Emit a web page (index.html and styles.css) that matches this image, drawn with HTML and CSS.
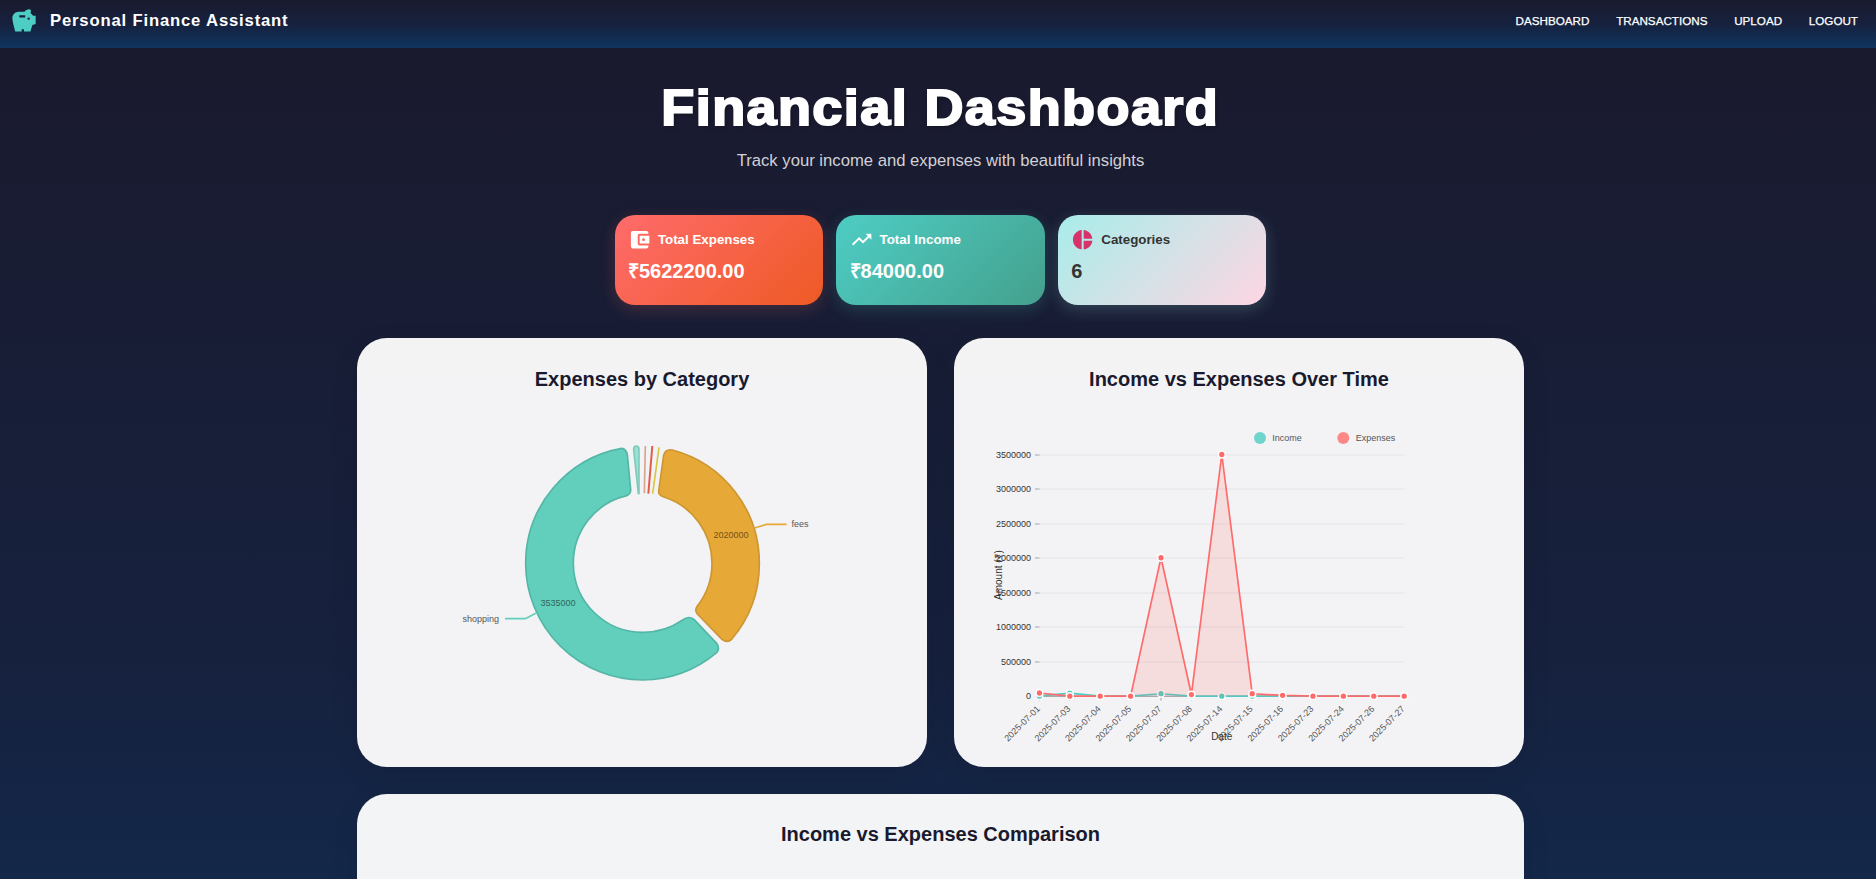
FILE: index.html
```html
<!DOCTYPE html>
<html lang="en">
<head>
<meta charset="utf-8">
<title>Personal Finance Assistant</title>
<link rel="stylesheet" href="styles.css">
</head>
<body>
<header class="navbar">
  <div class="brand">
    <svg class="brand-icon" viewBox="0 0 24 24"><path d="m19.83 7.5-2.27-2.27c.07-.42.18-.81.32-1.15.08-.18.12-.37.12-.58 0-.83-.67-1.5-1.5-1.5-1.64 0-3.09.79-4 2h-5C4.46 4 2 6.46 2 9.5S4.5 21 4.5 21H10v-2h2v2h5.5l1.68-5.59 2.82-.94V7.5h-2.17zM13 9H8V7h5v2zm3 2c-.55 0-1-.45-1-1s.45-1 1-1 1 .45 1 1-.45 1-1 1z"/></svg>
    <span class="brand-name">Personal Finance Assistant</span>
  </div>
  <nav class="links"><a>DASHBOARD</a><a>TRANSACTIONS</a><a>UPLOAD</a><a>LOGOUT</a></nav>
</header>
<main class="page">
  <h1 class="title">Financial Dashboard</h1>
  <p class="subtitle">Track your income and expenses with beautiful insights</p>
  <section class="stats">
    <div class="stat stat-expenses">
      <div class="stat-head"><svg viewBox="0 0 24 24"><path d="M21 18v1c0 1.1-.9 2-2 2H5c-1.11 0-2-.9-2-2V5c0-1.1.89-2 2-2h14c1.1 0 2 .9 2 2v1h-9c-1.11 0-2 .9-2 2v8c0 1.1.89 2 2 2h9zm-9-2h10V8H12v8zm4-2.5c-.83 0-1.5-.67-1.5-1.5s.67-1.5 1.5-1.5 1.5.67 1.5 1.5-.67 1.5-1.5 1.5z"/></svg><span>Total Expenses</span></div>
      <div class="stat-value">₹5622200.00</div>
    </div>
    <div class="stat stat-income">
      <div class="stat-head"><svg viewBox="0 0 24 24"><path d="m16 6 2.29 2.29-4.88 4.88-4-4L2 16.59 3.41 18l6-6 4 4 6.3-6.29L22 12V6z"/></svg><span>Total Income</span></div>
      <div class="stat-value">₹84000.00</div>
    </div>
    <div class="stat stat-categories">
      <div class="stat-head"><svg viewBox="0 0 24 24"><path d="M11 2v20c-5.07-.5-9-4.79-9-10s3.93-9.5 9-10zm2.03 0v8.99H22c-.47-4.74-4.24-8.52-8.97-8.99zm0 11.01V22c4.74-.47 8.5-4.25 8.97-8.99h-8.97z"/></svg><span>Categories</span></div>
      <div class="stat-value">6</div>
    </div>
  </section>
  <section class="charts">
    <article class="panel">
      <h2>Expenses by Category</h2>
      <svg class="chart" viewBox="357 396 570 371">
        <g transform="translate(440 430) scale(.33333)" stroke-width="5">
          <path fill="#62cfbc" stroke="#54b6a6" d="M545 55Q558 56 562 74L572 178Q573 191 560 197A208 208 0 0 0 400 401A208 208 0 0 0 608 607A208 208 0 0 0 728 570Q745 556 762 568L830 640Q841 655 830 668A351 351 0 0 1 608 750A351 351 0 0 1 257 401A351 351 0 0 1 545 55Z"/>
          <path fill="#e6a937" stroke="#ce9631" d="M656 183L671 76Q676 56 697 60A351 351 0 0 1 958 401A351 351 0 0 1 875 628Q861 640 846 628L772 552Q763 541 772 528A208 208 0 0 0 816 401A208 208 0 0 0 672 201Q655 196 656 183Z"/>
          <path fill="#98e2d3" stroke="#7fcbbb" d="M581 58Q581 48 589 48Q597 48 597 58L597 190H595Z"/>
          <g fill="none"><path stroke="#d3a78e" d="M616 48L613 190"/><path stroke="#e05c4b" stroke-width="6" d="M637 48L625 191"/><path stroke="#d9c740" d="M657 52L638 191"/>
          <path stroke="#e6a937" d="M944 294L979 283H1040"/><path stroke="#62cfbc" d="M289 549L256 566H195"/></g>
        </g>
        <g class="pie-text">
          <text x="791.5" y="527">fees</text><text x="462.5" y="622">shopping</text>
          <text class="on-orange" x="713.5" y="538">2020000</text><text class="on-teal" x="540.5" y="606">3535000</text>
        </g>
      </svg>
    </article>
    <article class="panel">
      <h2>Income vs Expenses Over Time</h2>
      <svg class="chart" id="timeline" viewBox="954 396 570 371"></svg>
    </article>
    <article class="panel panel-wide">
      <h2>Income vs Expenses Comparison</h2>
    </article>
  </section>
</main>
<script src="chart.js"></script>
</body>
</html>
```
FILE: styles.css
```css
* { box-sizing: border-box; }
html { overflow: hidden; }
body {
  margin: 0;
  height: 879px;
  overflow: hidden;
  font-family: "Liberation Sans", Arial, sans-serif;
  background: #1a1a2e;
}
.navbar {
  height: 48px;
  padding: 0 18px 8px 10px;
  display: flex;
  align-items: center;
  justify-content: space-between;
  background: linear-gradient(180deg, #1a1a2e 0%, #16213e 50%, #0f3460 100%);
  color: #fff;
}
.brand { display: flex; align-items: center; gap: 12px; }
.brand-icon { width: 28px; height: 28px; fill: #4ecdc4; margin-top: 2px; }
.brand-name { font-size: 16.67px; font-weight: 700; letter-spacing: .83px; padding-top: 1px; }
.links { display: flex; gap: 26.7px; font-size: 11.67px; -webkit-text-stroke: .25px #fff; }
.page {
  height: 1230px;
  padding: 30px 0 0 5px;
  background: linear-gradient(180deg, #1a1a2e 0%, #16213e 50%, #0f3460 100%);
  display: flex;
  flex-direction: column;
  align-items: center;
}
.title {
  margin: 0;
  font: 700 50px/60px "Liberation Sans", Arial, sans-serif;
  letter-spacing: 1.3px;
  transform: scaleX(1.08);
  -webkit-text-stroke: 2px #fff;
  color: #fff;
  text-shadow: 2px 2px 4px rgba(0, 0, 0, .3);
}
.subtitle { margin: 10px 0 41px; font-size: 16.67px; line-height: 26px; color: #d1d1d5; }
.stats { display: grid; grid-template-columns: repeat(3, 208.4px); gap: 13.3px; margin-bottom: 33px; }
.stat { height: 90px; padding: 13.3px; border-radius: 20px; color: #fff; }
.stat-expenses { background: linear-gradient(135deg, #ff6b6b, #ee5a24); box-shadow: 0 4px 16px rgba(255, 107, 107, .2); }
.stat-income { background: linear-gradient(135deg, #4ecdc4, #44a08d); box-shadow: 0 4px 16px rgba(78, 205, 196, .2); }
.stat-categories { background: linear-gradient(135deg, #a8edea, #fed6e3); box-shadow: 0 4px 16px rgba(168, 237, 234, .2); color: #333; }
.stat-head { display: flex; align-items: center; gap: 6.7px; height: 23.3px; font-size: 13.33px; font-weight: 700; }
.stat-head svg { width: 23.3px; height: 23.3px; fill: currentColor; }
.stat-categories svg { fill: #d6336c; }
.stat-value { margin-top: 3px; font-size: 20px; line-height: 32px; font-weight: 700; }
.charts { display: grid; grid-template-columns: 570px 570px; gap: 27px; }
.panel {
  height: 429px;
  padding-top: 25px;
  border-radius: 30px;
  overflow: hidden;
  background: rgba(255, 255, 255, .95);
  box-shadow: 0 7px 27px rgba(0, 0, 0, .1);
}
.panel-wide { grid-column: 1 / 3; }
.panel h2 { margin: 0; font-size: 20px; line-height: 33px; text-align: center; color: #1a1a2e; }
.panel-wide h2 { line-height: 31px; }
.chart { display: block; width: 570px; height: 371px; font-size: 9px; fill: #555; }
.pie-text, #timeline text { stroke: currentColor; stroke-width: 0; }
.on-orange { fill: #735419; }
.on-teal { fill: #2f675e; }
#timeline .dark { fill: #333; }
.axis-name { font-size: 10px; fill: #333; }
```
FILE: chart.js
```js
const svg = document.getElementById('timeline');
const dates = ['01', '03', '04', '05', '07', '08', '14', '15', '16', '23', '24', '26', '27'];
const income = [0, 44000, 0, 0, 36000, 0, 0, 0, 0, 0, 0, 0, 0];
const expenses = [46000, 0, 0, 0, 2005000, 24000, 3500000, 36000, 12000, 0, 0, 0, 0];
const px = i => 1039.4 + i * 30.4;
const py = v => 696.2 - v / 3500000 * 241.7;
let out = '';
for (let v = 0; v <= 3500000; v += 500000) {
  const y = v ? Math.round(py(v)) : 696.3;
  out += `<path d="M1039.5 ${y}H1404" stroke="${v ? '#e3e4e7' : '#999'}"/>`;
  out += `<path d="M1035 ${y}H1039.5" stroke="#a4a5a8"/>`;
  out += `<text class="dark" x="1031" y="${y + 3}" text-anchor="end">${v}</text>`;
}
dates.forEach((d, i) => {
  out += `<path d="M${px(i)} 696V700.5" stroke="#999"/>`;
  out += `<text transform="translate(${px(i) - 1} 707.3) rotate(-45)" text-anchor="end" y="3">2025-07-${d}</text>`;
});
const series = (data, color, area) => {
  const pts = data.map((v, i) => `${px(i)},${py(v)}`).join(' ');
  out += `<polygon points="${px(0)},696.2 ${pts} ${px(12)},696.2" fill="${color}" fill-opacity="${area}"/>`;
  out += `<polyline points="${pts}" fill="none" stroke="${color}" stroke-width="1.67"/>`;
  data.forEach((v, i) => {
    out += `<circle cx="${px(i)}" cy="${py(v)}" r="3.4" fill="${color}" stroke="#fff" stroke-width="1.5"/>`;
  });
};
series(income, '#4ecdc4', .15);
series(expenses, '#ff6b6b', .16);
out += '<circle cx="1260" cy="438" r="6" fill="#6fd4cc"/><text x="1272.3" y="441">Income</text>';
out += '<circle cx="1343.3" cy="438" r="6" fill="#fe8788"/><text x="1355.7" y="441">Expenses</text>';
out += '<text class="axis-name" x="1221.7" y="740" text-anchor="middle">Date</text>';
out += '<text class="axis-name" transform="translate(1001.5 575) rotate(-90)" text-anchor="middle">Amount (₹)</text>';
svg.innerHTML = out;
```
